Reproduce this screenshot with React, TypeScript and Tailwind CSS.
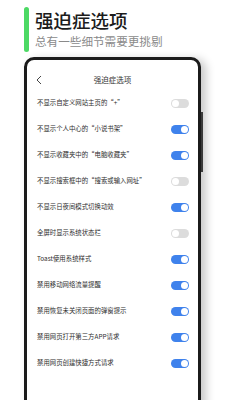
import React from 'react';

const rows: { label: string; on: boolean }[] = [
  { label: '不显示自定义网站主页的“+”', on: false },
  { label: '不显示个人中心的“小说书架”', on: true },
  { label: '不显示收藏夹中的“电脑收藏夹”', on: true },
  { label: '不显示搜索框中的“搜索或输入网址”', on: false },
  { label: '不显示日夜间模式切换动效', on: true },
  { label: '全屏时显示系统状态栏', on: false },
  { label: 'Toast使用系统样式', on: true },
  { label: '禁用移动网络流量提醒', on: true },
  { label: '禁用恢复未关闭页面的弹窗提示', on: true },
  { label: '禁用网页打开第三方APP请求', on: true },
  { label: '禁用网页创建快捷方式请求', on: true },
];

function Toggle({ on }: { on: boolean }) {
  return (
    <div
      className={`flex h-[9px] w-[18px] items-center rounded-full px-[1px] ${
        on ? 'justify-end bg-[#3f82ec]' : 'justify-start bg-[#dcdcdc]'
      }`}
    >
      <div className="h-[7px] w-[7px] rounded-full bg-white" />
    </div>
  );
}

export default function App() {
  return (
    <div
      className="h-[400px] w-[225px] overflow-hidden bg-white"
      style={{ fontFamily: '"Noto Sans CJK SC", "Noto Sans", sans-serif' }}
    >
      {/* Heading */}
      <div className="flex gap-[6px] pl-[24px] pt-[7px]">
        <div className="h-[45px] w-[5px] rounded-full bg-[#4cd964]" />
        <div className="flex flex-col">
          <h1 className="mt-[2px] text-[18.5px] font-medium leading-[22px] text-[#1c1c1c]">强迫症选项</h1>
          <p className="mt-[2px] text-[11.6px] leading-[16px] text-[#8a8a8a]">总有一些细节需要更挑剔</p>
        </div>
      </div>

      {/* Phone */}
      <div className="relative ml-[24px] mt-[5px] w-[177px]">
        <div className="absolute right-[-2px] top-[55px] h-[60px] w-[2px] bg-[#3a3a3a]" />
        <div className="h-[360px] rounded-t-[10px] border-[3px] border-[#1b1b1b] bg-white shadow-[5px_2px_10px_rgba(0,0,0,0.22)]">
          <div className="relative mt-[10px] flex h-[20px] items-center justify-center">
            <svg
              className="absolute left-[9px] top-[5px]"
              width="6"
              height="10"
              viewBox="0 0 6 10"
              fill="none"
              stroke="#444"
              strokeWidth="1"
            >
              <path d="M5 1 L1 5 L5 9" />
            </svg>
            <span className="text-[7.5px] text-[#333]">强迫症选项</span>
          </div>
          <div className="flex flex-col pl-[10px] pr-[9px]">
            {rows.map((r) => (
              <div key={r.label} className="flex h-[26px] items-center justify-between">
                <span className="text-[6.4px] text-[#2e2e2e]">{r.label}</span>
                <Toggle on={r.on} />
              </div>
            ))}
          </div>
        </div>
      </div>
    </div>
  );
}
